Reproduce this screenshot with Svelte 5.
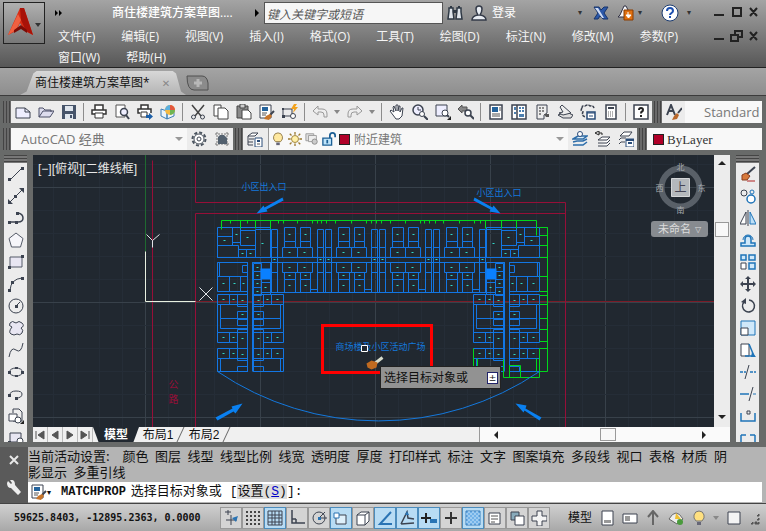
<script>
	const menus = ['文件(F)', '编辑(E)', '视图(V)', '插入(I)', '格式(O)', '工具(T)', '绘图(D)', '标注(N)', '修改(M)', '参数(P)', '窗口(W)', '帮助(H)'];
	const standardBar = ['new', 'open', 'save', '|', 'print', 'preview', 'publish', 'model3d', '|', 'cut', 'copy', 'paste', 'match', 'block', '|', 'undo', 'v', 'redo', 'v', '|', 'pan', 'zoom', 'zoomwin', 'zoomprev', '|', 'props', 'center', 'palette', 'sheet', 'markup', 'calc', '|', 'help'];
	const drawBar = ['line', 'xline', 'pline', 'polygon', 'rect', 'arc', 'circle', 'cloud', 'spline', 'ellipse', 'earc', 'insert', 'mkblock'];
	const modifyBar = ['erase', 'copyobj', 'mirror', 'offset', 'array', 'move', 'rotate', 'scale', 'stretch', 'trim', 'extend', 'breakpt', 'breakln'];
	const settings = ['颜色', '图层', '线型', '线型比例', '线宽', '透明度', '厚度', '打印样式', '标注', '文字', '图案填充', '多段线', '视口', '表格', '材质', '阴影显示', '多重引线'];
	let toggles = $state([
		{ id: 'infer', on: false }, { id: 'snap', on: false }, { id: 'grid', on: true }, { id: 'ortho', on: false }, { id: 'polar', on: false },
		{ id: 'osnap', on: true }, { id: 'osnap3', on: false }, { id: 'otrack', on: true }, { id: 'ducs', on: true }, { id: 'dyn', on: true },
		{ id: 'lwt', on: false }, { id: 'tpy', on: true }, { id: 'qp', on: false }, { id: 'sc', on: false }, { id: 'am', on: false },
	]);
	let search = $state('');

	const k = 'fill="none" stroke="#3c4350"';
	const icons = {
		new: `<path d="M1 4h9l5 4v6H1z" fill="#eef" stroke="#3c4350"/><path d="M10 4v4h5" ${k}/>`,
		open: `<path d="M1 13V4h4l2 2h6v2M1 13l4-6h11l-4 6z" fill="#dde" stroke="#4a4e66"/>`,
		save: `<path d="M1 1h14v14H1z" fill="#46546a"/><path d="M4 2h8v5H4zM4 10h8v5H4z" fill="#dfe6ee"/><path d="M9 11h2v3H9z" fill="#46546a"/>`,
		print: `<path d="M4 6V1h8v5M4 10H1V6h14v4h-3" fill="#fff" stroke="#333" stroke-width="1.5"/><path d="M4 9h8v5H4z" fill="#fff" stroke="#333"/>`,
		preview: `<path d="M2 1h9v12H2z" fill="#fff" stroke="#555"/><circle cx="10" cy="8" r="3.500" fill="#eef" stroke="#3c4350" stroke-width="1.500"/><path d="M12 11l3 4" stroke="#3c4350" stroke-width="2"/>`,
		publish: `<path d="M4 5V1h7v4M3 9H1V5h13v4" fill="#fff" stroke="#333" stroke-width="1.500"/><path d="M4 8h6v5H4z" fill="#fff" stroke="#333"/><path d="M9 11h3V9l4 3.500-4 3.500v-2H9z" fill="#1c5fa8"/>`,
		model3d: `<path d="M1 5l6 2v8l-6-3zM7 7l7-2v7l-7 3z" fill="#eaf3fb" stroke="#3d7fb5"/><circle cx="10" cy="6" r="5" fill="#f4b942"/><path d="M10 1a5 5 0 0 0-5 5h5z" fill="#5ab0e0"/><path d="M10 6h5a5 5 0 0 1-5 5z" fill="#6fb552"/><path d="M10 1a5 5 0 0 1 5 5h-5z" fill="#e2583e"/>`,
		cut: `<path d="M2 1l9 11M14 1L5 12" stroke="#444" stroke-width="1.500"/><circle cx="3.500" cy="13" r="2" ${k}/><circle cx="12.500" cy="13" r="2" ${k}/>`,
		copy: `<path d="M1 1h7v11H1z" fill="#fff" stroke="#444"/><path d="M5 4h7l3 3v8H5z" fill="#fff" stroke="#444"/>`,
		paste: `<path d="M1 2h11v12H1z" fill="#8a8a8a" stroke="#444"/><path d="M4 0h5v4H4z" fill="#ccc" stroke="#444"/><path d="M6 6h6l3 3v6H6z" fill="#fff" stroke="#444"/>`,
		match: `<path d="M1 1h11v13H1z" fill="#fff" stroke="#3c4350"/><path d="M3 3h6v4H3z" fill="#24639c"/><path d="M3 9h5M3 11h4" stroke="#555"/><path d="M15 7l-4 4" stroke="#3c4350" stroke-width="2"/><path d="M7 12l4-2 2 2-3 4-5-1z" fill="#c8752a"/>`,
		block: `<path d="M1 5h9v7H1z" ${k}/><path d="M0 11h3v3H0zM0 4h2v2H0z" fill="#3c4350"/><circle cx="11" cy="12" r="2.500" fill="#fff" stroke="#3c4350"/><path d="M12 0l-3 5h3l-1 4 5-6h-3l2-3z" fill="#f2a21c"/>`,
		undo: `<path d="M1 7l5-5v3h4q5 0 5 5v3h-3v-2q0-3-3-3H6v3z" fill="#eee" stroke="#999"/>`,
		redo: `<path d="M15 7l-5-5v3H6q-5 0-5 5v3h3v-2q0-3 3-3h3v3z" fill="#eee" stroke="#999"/>`,
		v: `<path d="M0 6h6l-3 4z" fill="#888"/>`,
		pan: `<path d="M4 11L1 7l1-1 3 2L4 3l1-1 2 5V1h2v6l1-5h1v6l2-4h1l-1 8-3 3H7z" fill="#fff" stroke="#3c4350"/>`,
		zoom: `<circle cx="6" cy="6" r="5" fill="#eef" stroke="#3c4350" stroke-width="1.500"/><path d="M6 3v3h3" ${k}/><circle cx="10" cy="10" r="2.500" fill="#fff" stroke="#3c4350"/><path d="M12 12l4 4" stroke="#3c4350" stroke-width="2"/>`,
		zoomwin: `<path d="M1 1h11v11H1z" fill="#eef" stroke="#3c4350"/><circle cx="10" cy="9" r="3" fill="#fff" stroke="#3c4350"/><path d="M12 11l2 2" stroke="#3c4350" stroke-width="2"/><path d="M16 12v4h-4z" fill="#222"/>`,
		zoomprev: `<path d="M0 5l4-4v2h5v4H4v2z" fill="#888" stroke="#555"/><circle cx="10" cy="9" r="3" fill="#fff" stroke="#3c4350" stroke-width="1.500"/><path d="M12 11l4 4" stroke="#3c4350" stroke-width="2"/>`,
		props: `<path d="M2 1h12v14H2z" fill="#fff" stroke="#3c4350" stroke-width="1.500"/><path d="M4 3h6v5H4z" fill="#24639c"/><path d="M4 10h8M4 12h8M11 4h2M11 6h2" stroke="#555"/>`,
		center: `<path d="M1 1h14v14H1zM6 1v14" fill="#fff" stroke="#3c4350" stroke-width="1.500"/><path d="M3 3h2v3H3zM3 8h2v2H3zM8 3h2v2H8zM11 3h2v2h-2zM8 6h2v2H8zM11 6h2v2h-2zM8 10h5v3H8z" fill="#4c7faf"/>`,
		palette: `<path d="M3 1h10v8l-3 2v4H3z" fill="#eee" stroke="#3c4350"/><path d="M5 3h2v2H5zM8 3h2v2H8zM5 6h2v2H5zM8 6h2v2H8zM5 9h2v2H5z" fill="#888"/><path d="M10 10h5v3h-3z" fill="#555"/>`,
		sheet: `<path d="M1 11l5 3h8l2-3-7-3z" fill="#ddd" stroke="#3c4350"/><path d="M3 3l2-2 9 8-8 2-4-2 4-1z" fill="#eee" stroke="#3c4350"/>`,
		markup: `<path d="M2 4q0-3 3-2 3-2 5 0 4-1 4 3M2 4q-2 3 1 4-2 4 3 5" fill="none" stroke="#3c4350" stroke-width="1.500" stroke-dasharray="3 1"/><path d="M7 8h8v7H7z" fill="#fff" stroke="#2a4c78" stroke-width="1.500"/><path d="M7 9h8M9 12h4" stroke="#2a4c78"/>`,
		calc: `<path d="M3 1h10v14H3z" fill="#fff" stroke="#3c4350" stroke-width="1.500"/><path d="M5 3h6v2H5z" fill="#3c4350"/><path d="M5 8h6M5 10h6M5 12h6" stroke="#666" stroke-dasharray="1 1"/>`,
		help: `<path d="M1 1h14v14H1z" fill="#fff" stroke="#3c4350" stroke-width="1.500"/><path d="M6 6q0-2 2-2t2 2q0 1-1 1.500T8 9.500M8 11v2" fill="none" stroke="#222" stroke-width="2"/>`,
		textstyle: `<path d="M1 11L5 1l4 10M2 7h6" fill="none" stroke="#3c4350" stroke-width="2"/><path d="M16 4l-4 5" stroke="#3c4350" stroke-width="2"/><path d="M8 12l3-3 2 2-2 4-5 1z" fill="#b8672a"/>`,
		gear: `<circle cx="8" cy="8" r="6.500" fill="none" stroke="#4c5560" stroke-width="2" stroke-dasharray="3 2"/><circle cx="8" cy="8" r="5" fill="#fff" stroke="#4c5560"/><circle cx="8" cy="8" r="2" ${k}/>`,
		myws: `<path d="M1 3h14M1 13h14M3 1v14M13 1v14" fill="none" stroke="#777" stroke-dasharray="2 1"/><path d="M4 13V6l2-2h4l3 3v6z" fill="#52606e"/>`,
		layers: `<path d="M1 5l4-3h6l-3 3zM2 8h5M1 11h5M1 14h5M1 5v9" fill="#fff" stroke="#3c4350"/><path d="M8 7h7v9H8z" fill="#fff" stroke="#2a4c78"/><path d="M10 9h3v2h-3z" fill="#2a4c78"/><path d="M10 13h3" stroke="#555"/>`,
		bulb: `<path d="M5 11q-3-3-2-6 1-4 5-4t5 4q1 3-2 6z" fill="#ffe9a0" stroke="#8a7440"/><path d="M6 12h4v3H6z" fill="#667"/>`,
		sun: `<circle cx="8" cy="8" r="4" fill="#fff0a8" stroke="#9a7a30"/><path d="M8 0v3M8 13v3M0 8h3M13 8h3M2 2l2 2M12 12l2 2M14 2l-2 2M4 12l-2 2" stroke="#9a7a30" stroke-width="1.500"/>`,
		vpfreeze: `<path d="M1 2h9v8H1z" fill="#ddd" stroke="#999"/><path d="M4 4h9v7H4z" fill="#eee" stroke="#999"/><circle cx="11" cy="11" r="3" fill="#ccc" stroke="#888"/>`,
		unlock: `<path d="M9 8V4q0-3 3-3t3 3v2" fill="none" stroke="#1c5f94" stroke-width="2"/><path d="M1 7h10v8H1z" fill="#bfe4fa" stroke="#1c5f94" stroke-width="1.500"/><path d="M6 9v4" stroke="#1c5f94" stroke-width="2"/>`,
		laycur: `<path d="M1 8l5-3h9l-4 3zM1 11l4-1h6l4-2M1 14h10l4-3" fill="#d8ecfa" stroke="#2d6ca8" stroke-width="1.500"/><circle cx="8" cy="3" r="2.500" fill="#fff" stroke="#2d4c78"/>`,
		layprev: `<path d="M3 9l4-3h8l-3 3zM3 12h9l3-3M3 15h9l3-3" fill="#fff" stroke="#3c4350"/><path d="M0 2l4-2v4zM4 2h3v2" fill="none" stroke="#222"/>`,
		laystate: `<path d="M2 5l4-4h8l-3 4zM1 9l2-2h5M1 13l2-2h4" fill="#fff" stroke="#3c4350"/><path d="M8 8h8v8H8z" fill="#fff" stroke="#2a4c78"/><path d="M8 9h8M10 12h4" stroke="#2a4c78" stroke-width="2"/>`,
		line: `<path d="M2 14L14 2" ${k}/><path d="M0 12h3v3H0zM13 1h3v3h-3z" fill="#3c4350"/>`,
		xline: `<path d="M2 14L14 2" ${k}/><path d="M0 16v-5l5 5zM16 0v5l-5-5zM6 7h3v3H6z" fill="#3c4350"/>`,
		pline: `<path d="M2 12h8q5 0 5-4t-5-5" ${k} stroke-width="1.500"/><path d="M0 11h3v3H0zM7 11h3v3H7zM8 2h3v3H8z" fill="#3c4350"/>`,
		polygon: `<path d="M8 1l7 5.500L12.500 15h-9L1 6.500z" fill="#f6f6fa" stroke="#555b68"/>`,
		rect: `<path d="M2 3h12v10H2z" fill="#e8e6f2" stroke="#555b68"/><path d="M0 12h3v3H0zM13 1h3v3h-3z" fill="#3c4350"/>`,
		arc: `<path d="M2 14q1-11 12-12" ${k}/><path d="M0 13h3v3H0zM3 5h3v3H3zM13 1h3v3h-3z" fill="#3c4350"/>`,
		circle: `<circle cx="8" cy="8" r="7" ${k}/><path d="M8 8l4-4" ${k}/><path d="M7 7h3v3H7z" fill="#3c4350"/>`,
		cloud: `<path d="M4 7Q0 6 2 3t6 0q3-3 6 0t-1 5q3 2 1 5t-5 1q-3 2-6 0t1-7z" fill="#e8e6f2" stroke="#3c4350"/>`,
		spline: `<path d="M1 15Q3 4 8 8t7-7" ${k}/>`,
		ellipse: `<ellipse cx="8" cy="8" rx="6.500" ry="4" ${k}/><path d="M0 7h3v3H0zM13 7h3v3h-3zM7 3h3v2H7zM7 11h3v2H7z" fill="#3c4350"/>`,
		earc: `<path d="M2 9q0-4 6-4t6 3q0 4-6 4" ${k}/><path d="M0 8h3v3H0zM7 11h3v3H7z" fill="#3c4350"/>`,
		insert: `<path d="M5 5V1h6l3 3v9H5" fill="#eee" stroke="#3c4350"/><path d="M1 6h8v7H1z" fill="#fff" stroke="#3c4350"/><circle cx="10" cy="12" r="3" fill="#fff" stroke="#3c4350"/><path d="M16 12v4h-4z" fill="#222"/>`,
		mkblock: `<path d="M2 3h11v9H2z" fill="#e8e6f2" stroke="#3c4350"/><circle cx="12" cy="11" r="3" fill="#fff" stroke="#3c4350"/><path d="M0 11h3v3H0z" fill="#3c4350"/>`,
		erase: `<path d="M15 1L7 8" stroke="#3c4350" stroke-width="2"/><path d="M2 9l4-2 4 3-3 4H2z" fill="#d77a3c" stroke="#8a3c1c"/><path d="M7 15h8" stroke="#b02020"/>`,
		copyobj: `<circle cx="4" cy="5" r="3" ${k}/><circle cx="11" cy="11" r="4" fill="#fff" stroke="#1f74b8" stroke-width="1.500"/><circle cx="12" cy="4" r="2" fill="none" stroke="#1f74b8"/>`,
		mirror: `<path d="M6 2v12H0z" fill="#fff" stroke="#3c4350"/><path d="M10 2v12h6z" fill="#bfe0f7" stroke="#1f74b8"/><path d="M8 0v16" stroke="#3c4350"/>`,
		offset: `<path d="M1 14h14v-3h-4V7a3 3 0 0 0-6 0v4H1z" fill="#cfe8fa" stroke="#1f74b8" stroke-width="1.500"/><path d="M3 8a5 5 0 0 1 10 0" fill="none" stroke="#1f74b8"/>`,
		array: `<path d="M1 9h5v6H1z" fill="#fff" stroke="#3c4350"/><path d="M1 1h5v5H1zM9 1h6v5H9zM9 9h6v6H9z" fill="#cfe8fa" stroke="#1f74b8" stroke-width="1.500"/>`,
		move: `<path d="M8 0l3 3H9v4h4V5l3 3-3 3V9H9v4h2l-3 3-3-3h2V9H3v2L0 8l3-3v2h4V3H5z" fill="#3c4350"/>`,
		rotate: `<path d="M9 2a6 6 0 1 1-5 2" fill="none" stroke="#3c4350" stroke-width="1.500"/><path d="M6 0v6L1 4z" fill="#3c4350"/>`,
		scale: `<path d="M1 1h14v14H1z" fill="#cfe8fa" stroke="#1f74b8"/><path d="M1 8h7v7H1z" fill="#fff" stroke="#3c4350"/>`,
		stretch: `<path d="M1 2h8v12H1z" fill="#fff" stroke="#3c4350"/><path d="M9 2l5 12H5" fill="none" stroke="#1f74b8" stroke-width="1.500"/><path d="M12 10l4 5h-5z" fill="#1f74b8"/>`,
		trim: `<path d="M9 1L5 15" ${k}/><path d="M0 8h6M10 8h6" stroke="#1f74b8" stroke-dasharray="3 1" stroke-width="1.500"/>`,
		extend: `<path d="M13 1L9 15" ${k}/><path d="M0 8h9" stroke="#1f74b8" stroke-width="1.500"/><path d="M13 8h3" stroke="#1f74b8"/>`,
		breakpt: `<path d="M1 5v8h14V5" fill="none" stroke="#1f74b8" stroke-width="1.500"/><path d="M7 3h3v3H7z" ${k}/>`,
		breakln: `<path d="M1 5h5M10 5h5M1 5v9h14V5" fill="none" stroke="#1f74b8" stroke-width="1.500"/>`,
		infer: `<path d="M2 2h6M5 0v5M8 5v10M3 10h11" ${k}/><path d="M9 8l6-2-2 6z" fill="#2a74b4"/>`,
		snap: `<path d="M1 1h2v2H1zM5 1h2v2H5zM9 1h2v2H9zM13 1h2v2h-2zM1 5h2v2H1zM5 5h2v2H5zM9 5h2v2H9zM13 5h2v2h-2zM1 9h2v2H1zM5 9h2v2H5zM9 9h2v2H9zM13 9h2v2h-2zM1 13h2v2H1zM5 13h2v2H5zM9 13h2v2H9zM13 13h2v2h-2z" fill="#444"/>`,
		grid: `<path d="M1 1h14v14H1zM1 5h14M1 8h14M1 12h14M5 1v14M8 1v14M12 1v14" ${k}/>`,
		ortho: `<path d="M3 0v13h13M7 9v4M3 9h4" ${k} stroke-width="1.500"/>`,
		polar: `<circle cx="8" cy="8" r="6" ${k}/><path d="M8 8l6-6M8 8h8" ${k}/><path d="M7 7h3v3H7z" fill="#2a74b4"/>`,
		osnap: `<path d="M3 5h10v9H3z" fill="#dff0fb" stroke="#3c4350"/><path d="M1 3h5v5H1z" fill="#fff" stroke="#2a74b4"/>`,
		osnap3: `<path d="M2 5l4-3h8v9l-4 4H2z" fill="#fff" stroke="#3c4350"/><path d="M2 5h8v10M10 5l4-3" ${k}/>`,
		otrack: `<path d="M14 2L3 14h12" fill="none" stroke="#2a74b4" stroke-width="2"/>`,
		ducs: `<path d="M2 14L8 2l1 6 6 1M2 14l13-1" ${k} stroke-width="1.500"/><path d="M8 1l2 4-4 0z" fill="#2a74b4"/>`,
		dyn: `<path d="M5 3v10M0 8h10" stroke="#222" stroke-width="2"/><path d="M9 9h7v4H9z" fill="#2a74b4"/>`,
		lwt: `<path d="M8 2v12M2 8h12" stroke="#333" stroke-width="2"/>`,
		tpy: `<path d="M1 1h14v14H1z" fill="#72b2e8" stroke="#3a7fbc"/><path d="M1 4h14M1 8h14M1 12h14M4 1v14M8 1v14M12 1v14" stroke="#cbe6fa" stroke-dasharray="2 2"/>`,
		qp: `<path d="M2 3h11v11H2z" fill="#fff" stroke="#3c4350"/><path d="M4 6h7M4 9h7M4 12h4" stroke="#555"/>`,
		sc: `<path d="M2 2h8v8H2z" fill="#8ab" stroke="#3c4350"/><path d="M6 6h9v9H6z" fill="#fff" stroke="#3c4350"/>`,
		am: `<path d="M6 1h5v5h5v5h-5v5H6v-5H1V6h5z" fill="#f4f4f4" stroke="#3c4350"/>`,
		layout: `<path d="M3 1h11v14H3z" fill="#fff" stroke="#3c4350"/><path d="M5 10h7v3H5z" fill="#999"/>`,
		quick: `<path d="M1 4h14v9H1z" fill="#fff" stroke="#3c4350"/><path d="M3 6h5v5H3z" fill="#999"/>`,
		annscale: `<path d="M8 1v14M3 7l5-6 5 6" fill="none" stroke="#666" stroke-width="2"/>`,
		hardware: `<path d="M1 9q7-12 14 0l-6 5z" fill="#eee" stroke="#666"/><path d="M8 3l5 6H7z" fill="#f0c030"/><circle cx="12" cy="12" r="3" fill="#4a9a3c"/>`,
		isolate: `<path d="M5 11q-3-3-2-6 1-4 5-4t5 4q1 3-2 6z" fill="#ffe080" stroke="#777"/><path d="M6 12h4v3H6z" fill="#667"/>`,
		clean: `<path d="M2 2h12v12H2z" fill="#f4f4f4" stroke="#3c4350"/>`,
		resize: `<path d="M14 4v2h-2zM14 8v2h-2zM10 12h2v2h-2zM14 12v2h-2zM6 14l2-2v2z" fill="#555" stroke="#555"/>`,
	};

	// the building is symmetric: the west half is listed, the east half mirrored about x = 378
	const mirrorX = ([x, y, w, h], axis) => [axis - x - w, y, w, h];
	const module = (c) => [
		[c - 13, 227, 11, 14], [c - 13, 241, 11, 6], [c + 3, 227, 10, 14], [c + 3, 241, 10, 6],
		[c - 15, 247, 15, 10], [c, 247, 15, 10], [c - 15, 262, 15, 10], [c, 262, 15, 10],
		[c - 13, 272, 11, 7], [c - 13, 279, 11, 13], [c + 3, 272, 10, 7], [c + 3, 279, 10, 13],
		[c - 26, 229, 6, 63], [c - 26, 247, 6, 25], [c + 20, 229, 6, 63], [c + 20, 247, 6, 25], [c + 13, 289, 7, 3],
	];
	const wingCorner = [
		[217, 227, 53, 30], [217, 236, 15, 9], [232, 227, 8, 15], [240, 230, 15, 15], [217, 245, 21, 12], [238, 249, 8, 8], [246, 249, 9, 8], [255, 229, 15, 28],
		[217, 262, 30, 14], [219, 262, 28, 14], [242, 265, 5, 7], [217, 276, 12, 15], [229, 276, 11, 15], [240, 276, 7, 15],
		[252, 262, 18, 32], [253, 263, 8, 8], [253, 271, 8, 8], [253, 279, 8, 8], [253, 287, 8, 8], [261, 282, 9, 10],
	];
	const wingRows = [
		[217, 294, 12, 10], [229, 294, 8, 10], [237, 294, 10, 12], [217, 304, 30, 28], [220, 304, 27, 14], [220, 318, 27, 10], [237, 311, 10, 7], [237, 319, 10, 6],
		[217, 332, 12, 10], [229, 332, 8, 10], [237, 329, 10, 19], [217, 348, 12, 10], [229, 348, 8, 10], [237, 348, 10, 12], [217, 358, 30, 13], [220, 358, 27, 13], [237, 366, 10, 5],
	];
	const westWing = [...wingCorner, ...wingRows, ...wingRows.map((r) => mirrorX(r, 500))];
	const walls = [...westWing, ...westWing.map((r) => mirrorX(r, 756)), ...module(297), ...module(351), ...module(405), ...module(459)];
	const furniture = walls.filter(([, , w, h]) => w > 5 && h > 6 && w < 20 && h < 30);
	const greenTies = [227, 235, 245, 257, 276, 291, 295, 304, 318, 329, 341, 348, 371];
	const greenTicks = [230, 247, 278, 283, 297, 312, 317, 321, 326, 335, 351, 366, 371, 376, 381, 390, 405, 420, 424, 429, 435, 443, 459, 474, 480];
	const minorX = Array.from({ length: 30 }, (_, i) => 53 + i * 23);
	const minorY = Array.from({ length: 12 }, (_, i) => 164 + i * 23);
	const path = (rects) => rects.map(([x, y, w, h]) => `M${x} ${y}h${w}v${h}h${-w}z`).join('');
	const dots = furniture.map(([x, y, w, h]) => `M${x + (w >> 1) - 1} ${y + (h >> 1)}h2`).join('');
</script>

{#snippet icon(name)}
	<svg class="icon" viewBox="0 0 16 16" width="16" height="16" aria-hidden="true">{@html icons[name]}</svg>
{/snippet}

<div class="cad">
	<header>
		<button class="logo" aria-label="应用程序菜单">
			<svg width="40" height="38" viewBox="0 0 40 38">
				<path d="M4 31L16 4h4l9 27-8-4-5-8-4 8z" fill="#d82c14" /><path d="M16 4h4l9 27-7-4-5-11z" fill="#a81208" /><path d="M4 31l8-5 5-10-3-6z" fill="#f06040" /><path d="M10 26l7-5 6 5v3l-6-4-7 4z" fill="#7c0c06" />
				<path d="M31 19h6l-3 4z" fill="#333" />
			</svg>
		</button>
		<div class="head-main">
			<div class="title-row">
				<svg class="more" width="8" height="6" viewBox="0 0 8 6"><path d="M0 0l3 3-3 3zM4 0l3 3-3 3z" /></svg>
				<strong class="title">商住楼建筑方案草图....</strong>
				<svg width="6" height="8" viewBox="0 0 6 8"><path d="M1 0l4 4-4 4z" /></svg>
				<input class="search" aria-label="搜索" placeholder="键入关键字或短语" bind:value={search} />
				<button class="plain" aria-label="查找"><svg width="16" height="16" viewBox="0 0 16 16"><path d="M2 3h4v4l1 7H1l1-8zM10 3h4v4l1 7H9l1-8z" fill="#dfe5ec" stroke="#2e3844" stroke-width="1.500" /><path d="M6 5h4v3H6zM3 1h2v2H3zM11 1h2v2h-2z" fill="#2e3844" /></svg></button>
				<button class="plain login"><svg width="16" height="16" viewBox="0 0 16 16"><path d="M5 4q0-3 3-3t3 3-2 6q6 1 6 5H1q0-4 6-5-2-3-2-6z" fill="#e8ecf2" stroke="#333a48" stroke-width="1.500" /></svg>登录</button>
				<span class="spacer"></span>
				<span class="caret">▾</span>
				<button class="plain" aria-label="Exchange"><svg width="16" height="14" viewBox="0 0 16 14"><path d="M1 1h5l2 3 3-3h4l-4 6 4 6h-5L7 10l-2 3H1l4-6z" fill="#2c58a8" stroke="#18346a" /><path d="M2 2h3l6 10H9z" fill="#cfdcf4" /></svg></button>
				<button class="plain a360" aria-label="Autodesk 360"><svg width="17" height="16" viewBox="0 0 17 16"><path d="M1 12l2-2 4-9h2l3 6-4 5z" fill="#f4f6fa" stroke="#334" /><path d="M7 5h9v10H7z" fill="#e07010" stroke="#8a3c00" /><path d="M11 7v4M9 10l2.500 3 2.500-3z" fill="#fff" stroke="#fff" /></svg></button>
				<span class="caret">▾</span>
				<button class="plain ask" aria-label="帮助"><svg width="18" height="18" viewBox="0 0 18 18"><circle cx="9" cy="9" r="8" fill="#fff" stroke="#1c3c70" /><path d="M6 7q0-3 3-3t3 3q0 1-1.500 2T9 11M9 12v2" fill="none" stroke="#1d50b0" stroke-width="2" /></svg></button>
				<span class="caret">▾</span>
				<svg class="wctl" width="44" height="12" viewBox="0 0 44 12"><path d="M0 8h10M19 1h8v8h-8zM36 1l7 8M43 1l-7 8" fill="none" stroke="#222" stroke-width="2" /></svg>
			</div>
			<div class="menu-row">
				<nav>
					{#each menus as m}<button class="menu">{m}</button>{/each}
				</nav>
				<svg class="wctl" width="44" height="12" viewBox="0 0 44 12"><path d="M0 9h10M17 5h7v6h-7zM21 4V1h7v6h-3M36 2l7 8M43 2l-7 8" fill="none" stroke="#222" stroke-width="2" /></svg>
			</div>
		</div>
	</header>

	<div class="file-tabs">
		<button class="file-tab">商住楼建筑方案草图* <span class="close">✕</span></button>
		<button class="add-tab" aria-label="新建"><svg width="24" height="16" viewBox="0 0 24 16"><path d="M1 1h15q5 0 6 7v7H8Q1 15 1 1z" fill="#8b8b8b" stroke="#505050" /><path d="M12 4v8M8 8h8" stroke="#b8b8b8" stroke-width="3" /></svg></button>
	</div>

	<div class="bars">
		<div class="bar-row">
			<div class="bar std">
				<span class="grip"></span>
				{#each standardBar as t}
					{#if t === '|'}<span class="sep"></span>
					{:else if t === 'v'}<button class="tool drop" aria-label="更多"><svg width="6" height="16" viewBox="0 0 6 16">{@html icons.v}</svg></button>
					{:else}<button class="tool" aria-label={t}>{@render icon(t)}</button>{/if}
				{/each}
			</div>
			<div class="bar grow">
				<span class="grip"></span>
				<button class="tool" aria-label="文字样式">{@render icon('textstyle')}</button>
				<select class="style-select" aria-label="样式"><option>Standard</option></select>
			</div>
		</div>
		<div class="bar-row">
			<div class="bar">
				<span class="grip"></span>
				<div class="combo ws"><select aria-label="工作空间"><option>AutoCAD 经典</option></select><span class="arrow"></span></div>
				<button class="tool" aria-label="设置">{@render icon('gear')}</button>
				<button class="tool" aria-label="我的工作空间">{@render icon('myws')}</button>
			</div>
			<div class="bar layer">
				<span class="grip"></span>
				<button class="tool" aria-label="图层特性">{@render icon('layers')}</button>
				<div class="combo lay">
					{#each ['bulb', 'sun', 'vpfreeze', 'unlock'] as s}{@render icon(s)}{/each}
					<i class="swatch"></i>
					<select aria-label="图层"><option>附近建筑</option></select><span class="arrow"></span>
				</div>
				{#each ['laycur', 'layprev', 'laystate'] as t}<button class="tool" aria-label={t}>{@render icon(t)}</button>{/each}
			</div>
			<div class="bar grow">
				<span class="grip"></span>
				<div class="combo color"><i class="swatch"></i><select aria-label="颜色"><option>ByLayer</option></select></div>
			</div>
		</div>
	</div>

	<main>
		<div class="side">
			<span class="hgrip"></span>
			{#each drawBar as t}<button class="stool" aria-label={t}>{@render icon(t)}</button>{/each}
		</div>
		<div class="view">
			<div class="view-top">
				<div class="canvas">
					<!-- half-unit origin keeps whole-number strokes on pixel centres -->
					<svg class="drawing" viewBox="32.5 154.5 681 272" preserveAspectRatio="xMidYMid slice">
						{#each minorX as x, i}<path d="M{x} 154v273" stroke={i % 5 === 4 ? '#38414a' : '#252d37'} />{/each}
						{#each minorY as y, i}<path d="M32 {y}h682" stroke={i % 5 === 1 ? '#38414a' : '#252d37'} />{/each}
						<path d="M195 301h519" stroke="#7a1c28" />
						<path d="M152 160v267" stroke="#960f38" />
						<path d="M195 160v42" stroke="#960f38" />
						<path d="M195 213v214" stroke="#960f38" />
						<path d="M195 202h370" stroke="#960f38" />
						<path d="M195 213h370" stroke="#960f38" />
						<path d="M565 202v225" stroke="#960f38" />
						<path d="M145 154v97" stroke="#1f6a30" />
						<path d="M145 251v50h50" stroke="#e8f0e0" fill="none" />
						<path d="M146 234l6 6 7-6M152 240v7M199 287l13 13M212 287l-13 13" stroke="#e0e4e8" fill="none" />
						<path d={path(walls)} stroke="#1276e4" fill="none" />
						<path d="M217 257h322M217 262h30M252 262h252M509 262h30M270 292h216M247 262v109M252 262v109M504 262v109M509 262v109" stroke="#1276e4" fill="none" />
						<path d="M260 268h10v11h-10zM486 268h10v11h-10z" fill="#0a80ff" />
						<path d={dots} stroke="#30d8c8" />
						<g stroke="#00d81c" fill="none">
							<path d="M221 229v-9h315v15M240 220v8M255 220v8M270 220v8M485 220v8M501 220v8M516 220v8M538 227h9v144" />
							{#each greenTies as y}<path d="M539 {y}h8" />{/each}
							{#each greenTicks as x}<path d="M{x} 220v3" />{/each}
							<path d="M539 348v29h-36v-18M473 348v23M477 358v10M509 365h11v12h-11zM536 358v13" />
						</g>
						<path d="M217 371a287 287 0 0 0 322 0" stroke="#1478dc" fill="none" />
						<g fill="#0a80f0">
							<path d="M282 197l1 3-17 9 1 2-11 2 7-8 1 2z" /><path d="M474 197l-1 3 17 9-1 2 11 2-7-8-1 2z" />
							<path d="M215 417l2 3 16-9 2 2 7-10-11 3 1 2z" /><path d="M541 417l-2 3-15-10-1 2-8-9 11 2-1 3z" />
						</g>
						<g class="note">
							<text x="241" y="189">小区出入口</text><text x="476" y="195">小区出入口</text><text x="335" y="349">商场楼及小区活动广场</text>
						</g>
						<g class="road"><text x="168" y="387">公</text><text x="168" y="402">路</text></g>
						<path d="M322 325h109v47H322z" stroke="#f00" stroke-width="3" fill="none" />
						<path d="M361 345h6v6h-6z" stroke="#fff" fill="#212830" />
						<path d="M382 357l-9 7" stroke="#d8dccc" stroke-width="3" /><path d="M366 363l5-3 6 2-1 5-5 2-4-2z" fill="#c06a20" />
						<g class="cube">
							<circle cx="680" cy="187" r="19" fill="none" stroke="#596068" stroke-width="6" />
							<path d="M671 178h18v18h-18z" fill="#b4b8bc" stroke="#d4d6d8" />
							<text x="680" y="191" class="face">上</text>
							<text x="680" y="169">北</text><text x="659" y="190">西</text><text x="701" y="190">东</text><text x="680" y="212">南</text>
						</g>
					</svg>
					<span class="viewlabel">[−][俯视][二维线框]</span>
					<button class="ucs">未命名 <span>▽</span></button>
					<div class="tip">选择目标对象或 <b>±</b></div>
				</div>
				<div class="vscroll"><i class="up"></i><i class="thumb"></i><i class="down"></i></div>
			</div>
			<div class="view-bottom">
				{#each ['M3 3v8M11 3v8L5 7z', 'M10 3v8L4 7z', 'M4 3v8l6-4z', 'M11 3v8M3 3v8l6-4z'] as d}
					<button class="nav" aria-label="布局"><svg width="14" height="14" viewBox="0 0 14 14"><path {d} fill="#555" stroke="#555" /></svg></button>
				{/each}
				<button class="ltab on">模型</button><button class="ltab">布局1</button><button class="ltab">布局2</button>
				<div class="hscroll"><i class="left"></i><i class="hthumb"></i><i class="right"></i></div>
			</div>
		</div>
		<div class="side right-side">
			<span class="hgrip"></span>
			{#each modifyBar as t}<button class="stool" aria-label={t}>{@render icon(t)}</button>{/each}
		</div>
	</main>

	<section class="cmd">
		<div class="cmd-side">
			<svg width="10" height="10" viewBox="0 0 10 10"><path d="M1 1l8 8M9 1L1 9" stroke="#e8e8e8" stroke-width="2" /></svg>
			<svg width="16" height="16" viewBox="0 0 16 16"><path d="M2 1l3 3 1-1-2-3q5-1 5 5l6 7-3 3-7-7Q1 8 1 3z" fill="#eee" /></svg>
		</div>
		<div class="cmd-main">
			<p class="history">当前活动设置:&ensp;&ensp;{settings.join('\u2002')}</p>
			<label class="prompt">
				{@render icon('match')}<span class="dd">▾</span><b>MATCHPROP</b>
				<span>选择目标对象或 [<mark>设置(<a href="#s">S</a>)</mark>]:</span>
				<input aria-label="命令" />
			</label>
		</div>
	</section>

	<footer>
		<span class="coords">59625.8403, -12895.2363, 0.0000</span>
		<div class="toggles">
			{#each toggles as t}
				<button class="toggle" class:on={t.on} aria-label={t.id} onclick={() => t.on = !t.on}>{@render icon(t.id)}</button>
			{/each}
		</div>
		<button class="model">模型</button>
		{#each ['layout', 'quick', 'annscale', 'hardware', 'isolate'] as t}<button class="tool" aria-label={t}>{@render icon(t)}</button>{/each}
		<button class="tool drop" aria-label="更多"><svg width="6" height="16" viewBox="0 0 6 16">{@html icons.v}</svg></button>
		<button class="tool" aria-label="全屏显示">{@render icon('clean')}</button>
		{@render icon('resize')}
	</footer>
</div>

<style>
	:global(body) { margin: 0; background: #666; }
	.cad { min-height: 100vh; display: flex; flex-direction: column; box-sizing: border-box; background: #686a69; font: 12px/16px "Liberation Sans", "Noto Sans CJK SC", sans-serif; color: #111; overflow: hidden; }
	button { border: 0; padding: 0; margin: 0; background: none; font: inherit; color: inherit; display: flex; align-items: center; justify-content: center; }
	svg { flex: none; display: block; }
	.spacer { flex: 1; }

	header { display: flex; height: 67px; background: linear-gradient(#a4a4a4, #575757); border-bottom: 1px solid #222; font-family: "Open Sans", "Noto Sans CJK SC", sans-serif; }
	.logo { width: 42px; height: 42px; margin: 2px 0 0 3px; border: 1px solid #222; background: linear-gradient(#b0b0b0, #787878); box-sizing: border-box; }
	.head-main { flex: 1; min-width: 0; padding: 2px 8px 0 13px; }
	.title-row { display: flex; align-items: center; height: 22px; }
	.more { margin: 0 49px 0 -3px; }
	.title { width: 142px; color: #fff; font-weight: 500; }
	.search { width: 179px; height: 22px; margin: 0 4px; padding: 0 2px; box-sizing: border-box; border: 1px solid #555; background: #f6f6f6; font: italic 12px "Noto Sans CJK SC", sans-serif; }
	.search::placeholder { color: #555; }
	.plain { margin-right: 8px; }
	.login { gap: 5px; color: #fff; }
	.caret { color: #333; font: 8px/16px "DejaVu Sans", sans-serif; margin-right: 11px; }
	.a360 { margin-right: 4px; }
	.ask { margin: 0 8px; }
	.wctl { margin-left: 12px; }
	.menu-row { display: flex; align-items: start; padding-top: 2px; }
	nav { flex: 1; display: flex; flex-wrap: wrap; gap: 0 26px; }
	.menu { height: 21px; color: #f4f4f4; }
	.menu-row .wctl { margin: 4px 0 0 2px; }

	.file-tabs { display: flex; align-items: end; height: 27px; padding-left: 20px; background: linear-gradient(#a4a4a4, #8e8e8e); border-bottom: 1px solid #3c3c3c; }
	.file-tab { height: 24px; padding: 0 16px 0 15px; gap: 12px; font-family: "Open Sans", "Noto Sans CJK SC", sans-serif; background: linear-gradient(#d8d8d8, #b4b4b4); clip-path: polygon(0 100%, 4% 85%, 8% 10%, 10% 0, 92% 0, 94% 10%, 97% 85%, 100% 100%); }
	.close { color: #888; font: bold 10px "DejaVu Sans", sans-serif; }
	.add-tab { height: 24px; }

	.bars { padding: 5px 4px 3px 3px; display: flex; flex-direction: column; gap: 5px; }
	.bar-row { display: flex; gap: 2px; height: 22px; }
	.bar { display: flex; background: #ececec; flex: none; }
	.bar.grow { flex: 1; min-width: 0; }
	.grip { width: 8px; background: repeating-linear-gradient(90deg, #444 0 1px, #6a6a6a 1px 3px); flex: none; }
	.tool { width: 23px; height: 22px; flex: none; }
	.drop { width: 12px; }
	.sep { width: 1px; margin: 2px 3px; background: #8c8c8c; }
	select { appearance: none; border: 0; background: none; padding: 0; flex: 1; min-width: 0; font: 13px "Open Sans", "Noto Sans CJK SC", sans-serif; color: #777; }
	.style-select { background: #f8f8f8; padding-left: 19px; }
	.combo { display: flex; align-items: center; background: #f8f8f8; box-sizing: border-box; }
	.ws { width: 176px; padding-left: 10px; }
	.layer { flex: 1 1 300px; max-width: 402px; }
	.lay { flex: 1; padding-left: 2px; border-left: 1px solid #999; margin-left: 2px; }
	.lay .icon { width: 14px; height: 14px; margin-right: 3px; }
	.lay select { font-size: 12px; margin-left: 4px; }
	.arrow { border: 4px solid transparent; border-top-color: #999; border-bottom: 0; margin-right: 4px; }
	.swatch { width: 9px; height: 9px; background: #b00028; border: 1px solid #222; flex: none; }
	.color { flex: 1; padding-left: 6px; }
	.color select { font: 13px "Liberation Serif", serif; color: #333; margin-left: 3px; }

	main { flex: 1 0 294px; min-height: 0; display: flex; box-sizing: border-box; padding: 2px 7px 5px 4px; }
	.side { width: 23px; height: 287px; flex: none; background: #ececec; overflow: hidden; }
	.hgrip { display: block; height: 8px; background: repeating-linear-gradient(#444 0 1px, #777 1px 3px); }
	.stool { width: 23px; height: 22px; }
	.view { flex: 1; min-width: 0; margin: 0 6px 0 6px; display: flex; flex-direction: column; }
	.view-top { flex: 1; display: flex; min-height: 0; }
	.canvas { flex: 1; position: relative; background: #212830; overflow: hidden; min-width: 0; }
	.drawing { position: absolute; width: 100%; height: 100%; }
	.note { fill: #1478dc; font: 9px "Noto Sans CJK SC", sans-serif; }
	.road { fill: #960f38; font: 10px "Noto Sans CJK SC", sans-serif; }
	.cube { fill: #a8acb0; font: 8px "Noto Sans CJK SC", sans-serif; text-anchor: middle; }
	.face { fill: #445; font-size: 12px; }
	.viewlabel { position: absolute; left: 5px; top: 6px; color: #e8e8e8; font: 12px/16px "Liberation Sans", "Noto Sans CJK SC", sans-serif; }
	.ucs { position: absolute; right: 6px; top: 66px; width: 57px; height: 16px; border-radius: 3px; background: #878b90; color: #dcdcdc; font-size: 11px; gap: 4px; }
	.ucs span { font: 8px "DejaVu Sans", sans-serif; }
	.tip { position: absolute; left: 347px; top: 211px; width: 121px; height: 23px; box-sizing: border-box; padding: 0 2px 0 3px; display: flex; align-items: center; justify-content: space-between; background: #929292; border: 1px solid #222; color: #111; }
	.tip b { width: 9px; height: 10px; border: 1px solid #22246a; background: #fff; font: 9px/10px "DejaVu Sans", sans-serif; text-align: center; }
	.vscroll { width: 16px; background: #ececec; display: flex; flex-direction: column; align-items: center; }
	.up, .down { border: 4px solid transparent; }
	.up { border-bottom-color: #222; margin-top: 2px; }
	.down { border-top-color: #222; margin: auto 0 4px; }
	.thumb { width: 12px; height: 13px; margin-top: 57px; border: 1px solid #999; background: #f8f8f8; }
	.view-bottom { display: flex; height: 15px; background: #f0f0f0; }
	.nav { width: 15px; border-right: 1px solid #bbb; box-sizing: border-box; }
	.ltab { width: 46px; font-size: 12px; line-height: 14px; }
	.ltab::after { content: ""; width: 1px; height: 15px; margin-left: 7px; background: #666; transform: skewX(-25deg); }
	.ltab.on { background: #212830; color: #fff; font-weight: 700; clip-path: polygon(0 0, 100% 0, 88% 100%, 12% 100%); }
	.ltab.on::after { display: none; }
	.hscroll { flex: 0 0 36%; margin-left: auto; display: flex; align-items: center; justify-content: space-between; background: #fafafa; border-left: 1px solid #999; box-sizing: border-box; padding-left: 10px; }
	.left, .right { border: 4px solid transparent; }
	.left { border-right-color: #222; }
	.right { border-left-color: #222; margin-right: 20px; }
	.hthumb { width: 14px; height: 11px; border: 1px solid #999; background: #f8f8f8; margin-left: 16px; }

	.cmd { display: flex; height: 56px; }
	.cmd-side { width: 28px; display: flex; flex-direction: column; align-items: center; justify-content: space-around; background: #5a5a5a; }
	.cmd-main { flex: 1; min-width: 0; padding-right: 4px; background: #b4b4b4; }
	.history { margin: 0; height: 35px; padding: 1px 24px 0 0; box-sizing: border-box; font: 13px/16px "Noto Sans CJK SC", sans-serif; overflow: hidden; }
	.prompt { display: flex; align-items: center; height: 20px; padding-left: 3px; background: #fff; font: 13px/20px "Liberation Mono", "Noto Sans CJK SC", monospace; white-space: nowrap; }
	.prompt b { margin: 0 5px 0 10px; font-size: 12px; }
	.prompt input { flex: 1; min-width: 0; border: 0; background: none; }
	.prompt .dd { font: 8px "DejaVu Sans", sans-serif; }
	mark { background: #ddd; color: inherit; }
	mark a { color: #0000c8; }

	footer { display: flex; align-items: center; height: 27px; background: linear-gradient(#d0d0d0, #a8a8a8); border-top: 1px solid #444; }
	.coords { width: 206px; padding-left: 14px; font: bold 10px/16px "DejaVu Sans Mono", monospace; white-space: nowrap; }
	.toggles { display: flex; }
	.toggle { width: 22px; height: 22px; border: 1px solid #999; box-sizing: border-box; background: #d4d4d4; }
	.toggle.on { background: #b8dcf4; border-color: #4c8cbc; }
	.model { width: 45px; justify-content: end; padding-right: 3px; }
</style>
